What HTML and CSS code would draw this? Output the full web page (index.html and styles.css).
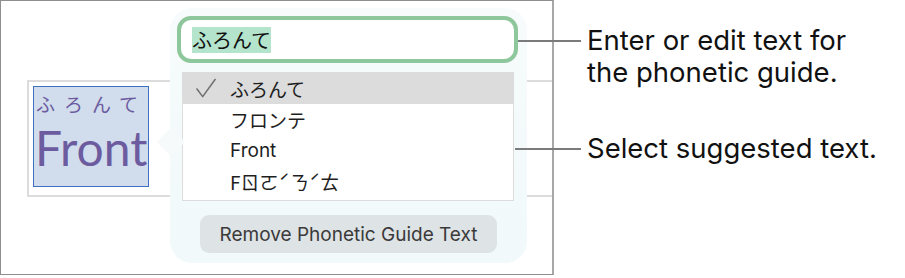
FILE: index.html
```html
<!DOCTYPE html>
<html lang="en">
<head>
    <meta charset="UTF-8">
    <title>Phonetic Guide</title>
    <link rel="stylesheet" href="styles.css">
</head>
<body>
    <div class="page">
        <!-- Screenshot of the document area -->
        <div class="shot">
            <div class="textbox">
                <div class="selection">
                    <div class="ruby"><span>ふろんて</span></div>
                    <div class="base">Front</div>
                </div>
            </div>

            <!-- Phonetic guide popover -->
            <div class="popover">
                <div class="field"><span class="hl">ふろんて</span></div>
                <div class="list">
                    <div class="row selected">
                        <svg class="check" width="22" height="21" viewBox="0 0 22 21">
                            <polyline points="1,11 7,19 20,1" fill="none" stroke="#707070" stroke-width="1.6" stroke-linecap="round" stroke-linejoin="round"/>
                        </svg>
                        <span class="jp">ふろんて</span>
                    </div>
                    <div class="row"><span class="check"></span><span class="jp">フロンテ</span></div>
                    <div class="row"><span class="check"></span><span>Front</span></div>
                    <div class="row"><span class="check"></span><span class="bpmf">Fㄖㄛˊㄋˊㄊ</span></div>
                </div>
                <button class="remove">Remove Phonetic Guide Text</button>
            </div>
        </div>

        <!-- Callouts -->
        <div class="notes">
            <p class="note first">Enter or edit text for<br>the phonetic guide.</p>
            <p class="note second">Select suggested text.</p>
        </div>
        <div class="leader one"></div>
        <div class="leader two"></div>
    </div>
</body>
</html>
```

FILE: styles.css
```css
* {
    box-sizing: border-box;
}
body {
    margin: 0;
    background: #ffffff;
    font-family: Inter, "Liberation Sans", "Noto Sans CJK JP", sans-serif;
}
.page {
    position: relative;
    display: flex;
    width: 905px;
    height: 278px;
}
.shot {
    position: relative;
    width: 554px;
    height: 275px;
    border: 1px solid #8e8e8e;
    border-right: 2px solid #a8a8a8;
    overflow: hidden;
}
.textbox {
    margin: 79px 0 0 26px;
    height: 117px;
    border: 2px solid #dcdcdc;
    border-right: none;
}
.selection {
    margin: 4px;
    width: 116px;
    height: 101px;
    border: 1.5px solid #3e71c0;
    background: #d1dcec;
    color: #6c5c9f;
    white-space: nowrap;
}
.ruby {
    font-family: "Noto Sans CJK JP", sans-serif;
    font-size: 19px;
    line-height: 24px;
    padding: 5px 0 0 2px;
}
.ruby span {
    letter-spacing: 9px;
    margin-right: -9px;
}
.base {
    font-family: Lato, "Open Sans", sans-serif;
    font-size: 48px;
    line-height: 56px;
    margin-top: 4px;
    padding-left: 1px;
}
.popover {
    position: absolute;
    left: 169px;
    top: 7px;
    width: 357px;
    height: 255px;
    border-radius: 22px;
    background: linear-gradient(#f7fbfb, #f1f9fb);
    padding: 8px 0 0 7px;
}
.popover::before {
    content: "";
    position: absolute;
    left: -9px;
    top: 124px;
    width: 20px;
    height: 20px;
    background: #f6fafa;
    transform: rotate(45deg);
}
.field {
    position: relative;
    width: 341px;
    height: 47px;
    border: 4px solid #8fc79c;
    border-radius: 14px;
    background: #ffffff;
    padding: 7px 0 0 11px;
}
.hl {
    font-family: "Noto Sans CJK JP", sans-serif;
    font-size: 20px;
    line-height: 26px;
    display: inline-block;
    background: #b4e4cb;
    color: #111111;
}
.list {
    margin: 9px 0 0 5px;
    width: 332px;
    height: 129px;
    border: 1px solid #dcdcdc;
    background: #ffffff;
    color: #1e1e1e;
    font-size: 19px;
}
.row {
    display: flex;
    align-items: center;
    height: 31px;
    padding-left: 13px;
}
.row.selected {
    background: #dcdcdc;
}
.check {
    flex: none;
    width: 21px;
    margin-right: 13px;
}
.jp {
    font-family: "Noto Sans CJK JP", sans-serif;
    font-size: 19px;
}
.bpmf {
    font-family: "Noto Sans CJK TC", sans-serif;
    font-size: 19px;
    line-height: 24px;
}
.remove {
    display: block;
    margin: 14px 0 0 23px;
    width: 297px;
    height: 38px;
    border: none;
    border-radius: 9px;
    background: #dee3e5;
    color: #3a3a3a;
    font-family: Inter, sans-serif;
    font-size: 19px;
}
.notes {
    margin-left: 33px;
    color: #111111;
    font-size: 27.5px;
}
.note {
    margin: 0;
    line-height: 32px;
}
.note.first {
    margin-top: 24px;
}
.note.second {
    margin-top: 44px;
}
.leader {
    position: absolute;
    height: 2px;
    background: #7b7b7b;
}
.leader.one {
    left: 518px;
    top: 40px;
    width: 63px;
}
.leader.two {
    left: 515px;
    top: 148px;
    width: 66px;
}
```
